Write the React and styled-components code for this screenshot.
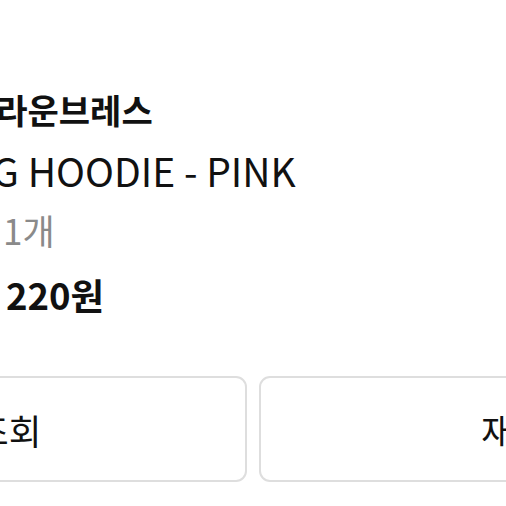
import React from 'react';
import styled, { createGlobalStyle } from 'styled-components';

const GlobalStyle = createGlobalStyle`
  html, body {
    margin: 0;
    padding: 0;
    background: #ffffff;
    overflow: hidden;
  }
  body {
    font-family: "Noto Sans CJK KR", "Noto Sans", sans-serif;
    color: #111111;
  }
`;

const Viewport = styled.div`
  width: 506px;
  height: 506px;
  overflow: hidden;
  position: relative;
`;

const Card = styled.section`
  width: 1096px;
  margin-left: -295px;
  padding-top: 80px;
  display: flex;
  flex-direction: column;
`;

const ItemRow = styled.div`
  display: flex;
  gap: 40px;
`;

const Thumb = styled.div`
  width: 220px;
  height: 220px;
  flex-shrink: 0;
  border-radius: 8px;
  background: #f3f0f0;
`;

const Info = styled.div`
  display: flex;
  flex-direction: column;
  white-space: nowrap;
`;

const Brand = styled.div`
  font-size: 34px;
  font-weight: 700;
  line-height: 60px;
`;

const Name = styled.div`
  font-size: 39px;
  font-weight: 400;
  line-height: 60px;
  text-indent: -10px;
`;

const Option = styled.div`
  font-size: 35px;
  font-weight: 400;
  line-height: 60px;
  color: #8a8a8a;
  text-indent: -2px;
`;

const Price = styled.div`
  margin-top: 5px;
  font-size: 36.5px;
  font-weight: 700;
  line-height: 60px;
  text-indent: -44px;
`;

const Thousands = styled.span`
  letter-spacing: 10px;
`;

const Actions = styled.div`
  margin-top: 51px;
  display: grid;
  grid-template-columns: 1fr 1fr;
  gap: 12px;
`;

const ActionButton = styled.button`
  height: 106px;
  border: 2px solid #dedede;
  border-radius: 11px;
  background: #ffffff;
  font-family: "Noto Sans CJK KR", "Noto Sans", sans-serif;
  font-size: 35.5px;
  font-weight: 400;
  color: #111111;
  padding: 0;
`;

export default function App() {
  return (
    <>
      <GlobalStyle />
      <Viewport>
        <Card>
          <ItemRow>
            <Thumb />
            <Info>
              <Brand>브라운브레스</Brand>
              <Name>BIG HOODIE - PINK</Name>
              <Option>총 1개</Option>
              <Price>
                <Thousands>31,</Thousands>220원
              </Price>
            </Info>
          </ItemRow>
          <Actions>
            <ActionButton>배송조회</ActionButton>
            <ActionButton>재구매</ActionButton>
          </Actions>
        </Card>
      </Viewport>
    </>
  );
}
